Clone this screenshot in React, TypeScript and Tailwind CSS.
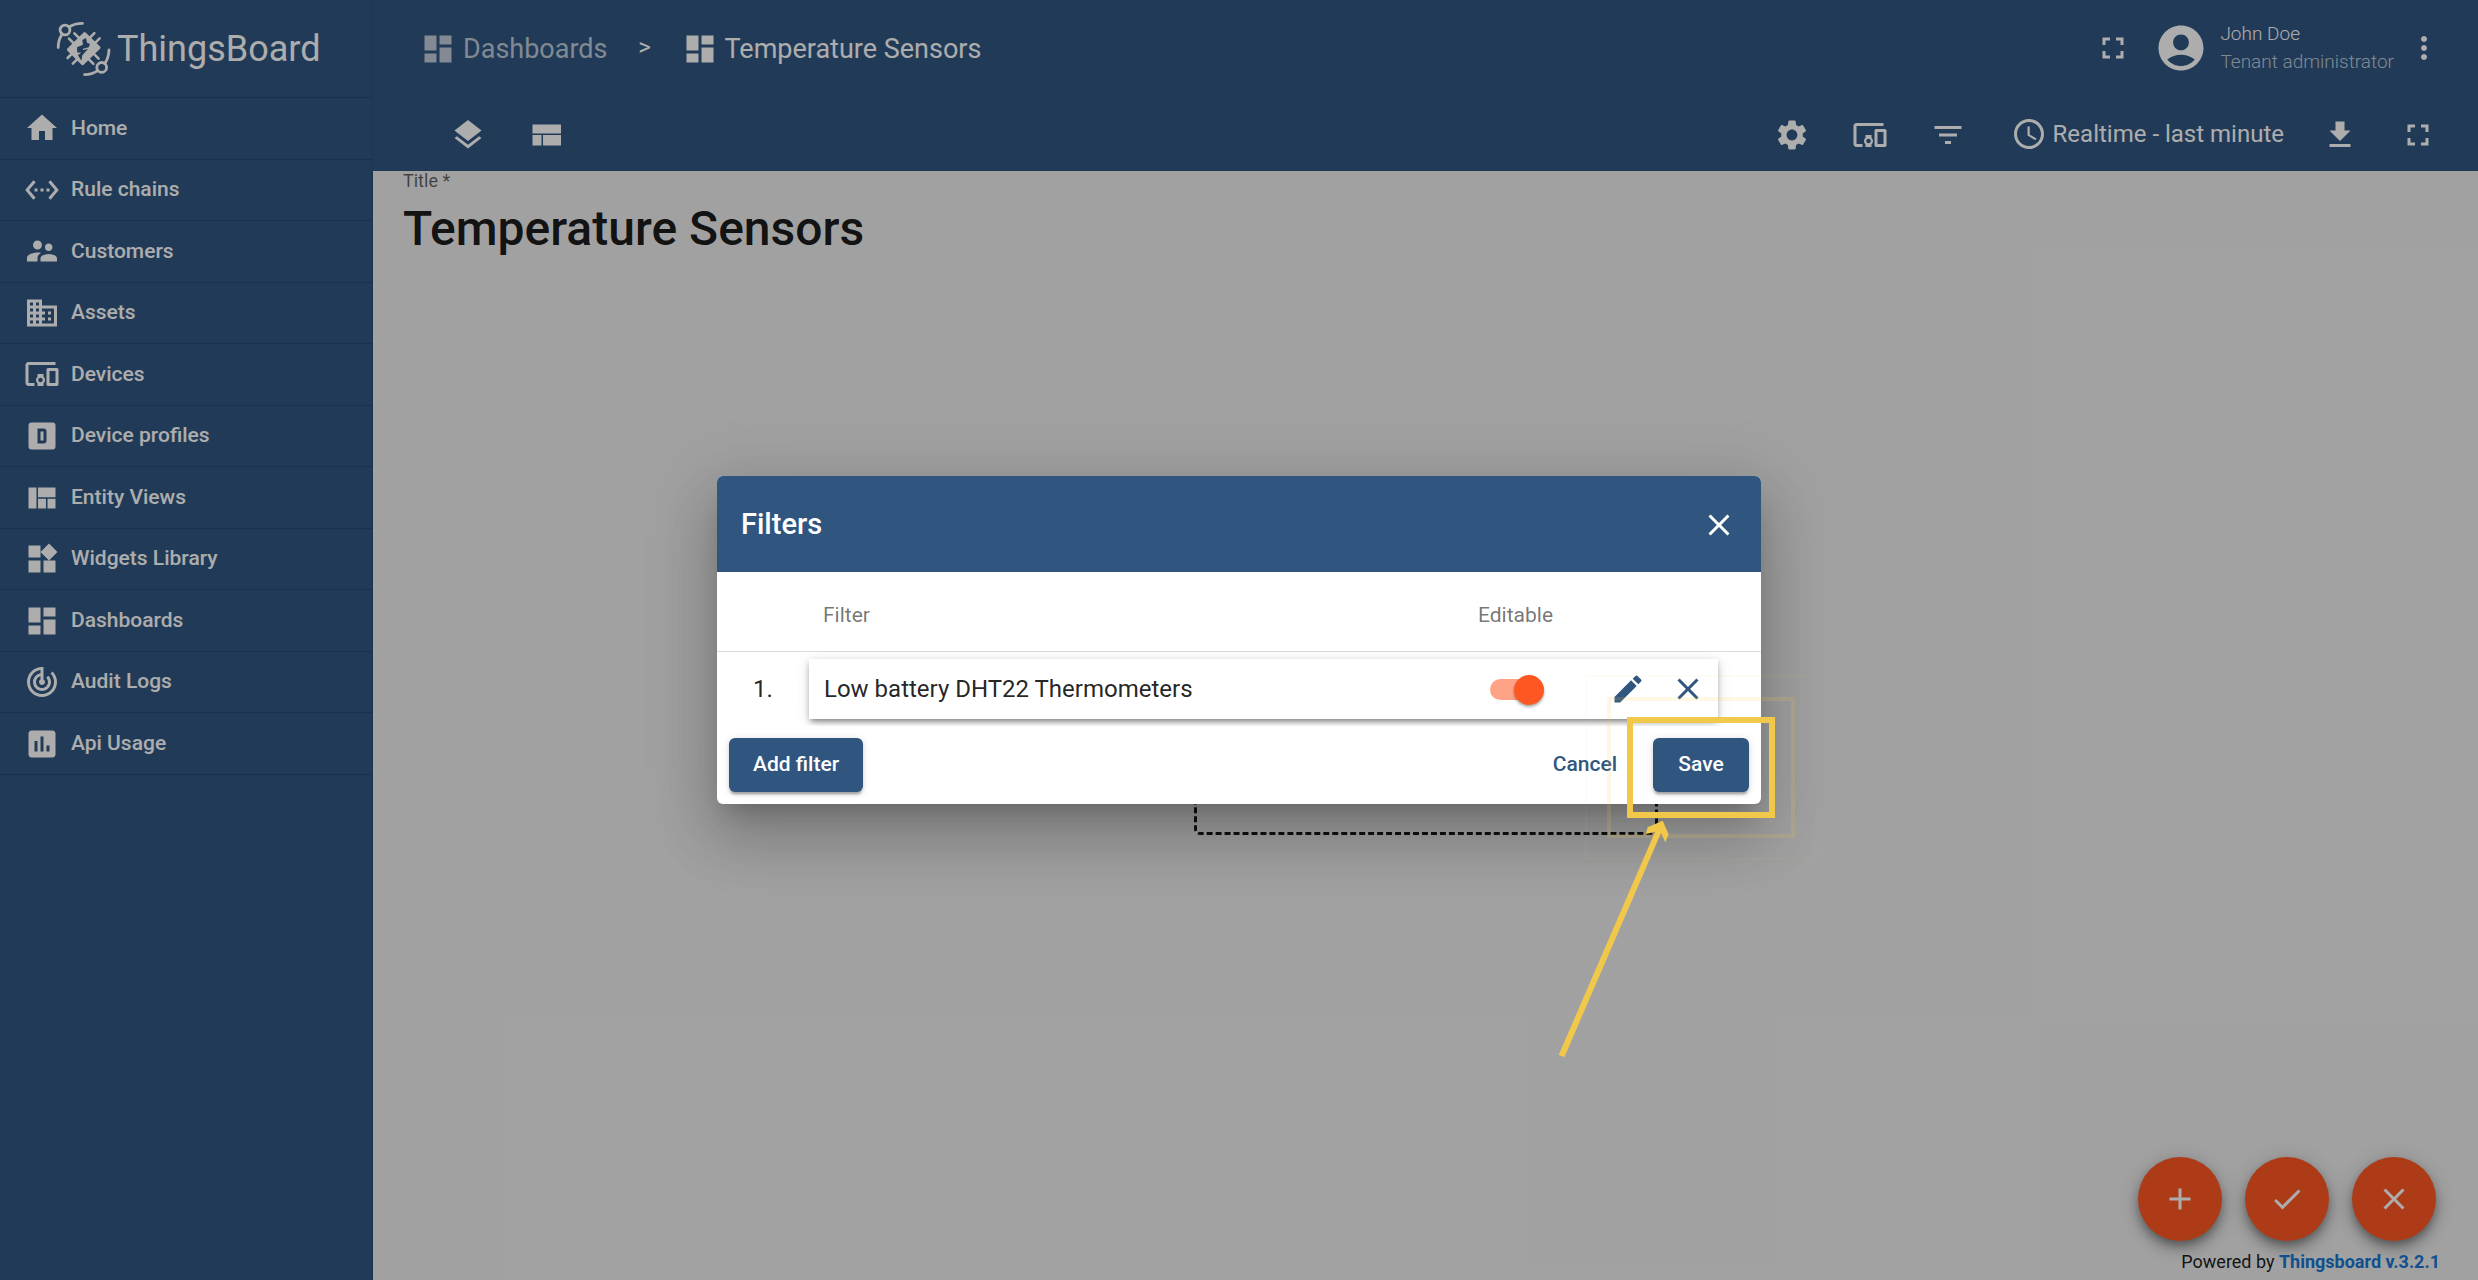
import React from "react";
import type { IconType } from "react-icons";
import {
  MdAccessTime,
  MdAccountCircle,
  MdAdd,
  MdCheck,
  MdClose,
  MdDashboard,
  MdDevicesOther,
  MdDomain,
  MdEdit,
  MdFileDownload,
  MdFilterList,
  MdFullscreen,
  MdHome,
  MdInsertChart,
  MdLayers,
  MdMoreVert,
  MdSettings,
  MdSettingsEthernet,
  MdSupervisorAccount,
  MdTrackChanges,
  MdViewQuilt,
  MdWidgets,
} from "react-icons/md";

type IconProps = { className?: string };
type Icon = IconType | ((props: IconProps) => React.ReactElement);

function AlphaDBox({ className }: IconProps) {
  return (
    <svg viewBox="0 0 24 24" fill="currentColor" className={className} aria-hidden="true">
      <path d="M5 3h14a2 2 0 0 1 2 2v14a2 2 0 0 1-2 2H5a2 2 0 0 1-2-2V5a2 2 0 0 1 2-2m4 4v10h4a2 2 0 0 0 2-2V9a2 2 0 0 0-2-2H9m2 2h2v6h-2V9z" />
    </svg>
  );
}

function LayoutIcon({ className }: IconProps) {
  return (
    <svg viewBox="0 0 24 24" fill="currentColor" className={className} aria-hidden="true">
      <path d="M3 19h6v-7H3v7zm7 0h12v-7H10v7zM3 5v6h19V5H3z" />
    </svg>
  );
}

function LogoMark() {
  return (
    <svg viewBox="0 0 60 60" className="size-[60px] shrink-0" fill="none" stroke="white" strokeLinecap="round" aria-hidden="true">
      <g strokeWidth="2.8">
        <circle cx="11" cy="11" r="4.9" />
        <path d="M28.5 4.4C23 4.4 18.6 5.6 15 8" />
        <path d="M4.2 28.5C4.2 23 5.8 18.6 8.2 15" />
        <circle cx="47.7" cy="48.4" r="4.9" />
        <path d="M55 31C54.8 36.4 53.4 40.6 50.8 44.5" />
        <path d="M30.5 55.6C35.6 55.6 40 54.2 43.8 51.6" />
      </g>
      <g strokeWidth="2.6">
        <path d="M20.4 14.4l5 5M15 19.6l5 5M40.4 14.2l-5 5M45.6 19.4l-5 5" />
        <path d="M13.6 39l5-5M18.8 44.6l5-5M44.6 39.6l-5-5M39.4 44.8l-5-5" />
      </g>
      <path d="M30.6 14.6L45 28.6L28.6 44.6L14.4 30.6Z" fill="white" strokeWidth="3" strokeLinejoin="round" />
      <path
        transform="translate(-4 -3) scale(0.3333)"
        d="M97 72L108 66L111 80L120 84L116 94L99 98L99 102L114 99L97 118L94 134L84 118L94 109L82 110L81 94L99 86Z"
        fill="#305680"
        stroke="none"
      />
    </svg>
  );
}

const menu: { label: string; icon: Icon }[] = [
  { label: "Home", icon: MdHome },
  { label: "Rule chains", icon: MdSettingsEthernet },
  { label: "Customers", icon: MdSupervisorAccount },
  { label: "Assets", icon: MdDomain },
  { label: "Devices", icon: MdDevicesOther },
  { label: "Device profiles", icon: AlphaDBox },
  { label: "Entity Views", icon: MdViewQuilt },
  { label: "Widgets Library", icon: MdWidgets },
  { label: "Dashboards", icon: MdDashboard },
  { label: "Audit Logs", icon: MdTrackChanges },
  { label: "Api Usage", icon: MdInsertChart },
];

function Sidebar() {
  return (
    <aside className="flex w-[373px] shrink-0 flex-col border-r border-black/10 bg-[#305680] text-white">
      <a href="#home" className="flex h-[98px] items-center gap-[3px] border-b border-black/15 pl-[54px]" aria-label="ThingsBoard">
        <LogoMark />
        <span className="text-4xl leading-none">ThingsBoard</span>
      </a>
      <nav>
        <ul className="grid h-[677px] auto-rows-fr">
          {menu.map(({ label, icon: Icon }) => (
            <li key={label} className="border-b border-black/15">
              <a href="#menu" className="flex h-full items-center gap-[11px] pl-6 text-[21px] font-medium">
                <Icon className="size-9" />
                {label}
              </a>
            </li>
          ))}
        </ul>
      </nav>
    </aside>
  );
}

function ToolButton({ label, icon: Icon }: { label: string; icon: Icon }) {
  return (
    <button type="button" aria-label={label} className="flex size-[60px] items-center justify-center">
      <Icon className="size-9" />
    </button>
  );
}

function TopBar() {
  return (
    <header className="flex h-24 items-center justify-between bg-[#305680] pl-[47px] pr-6 text-white">
      <nav aria-label="Breadcrumb" className="flex items-center pt-[2px] text-[27px]">
        <a href="#dashboards" className="flex items-center gap-[7px] text-white/70">
          <MdDashboard className="size-9" />
          Dashboards
        </a>
        <span className="w-[74px] pb-1 text-center text-2xl">&gt;</span>
        <a href="#current" className="flex items-center gap-[7px]">
          <MdDashboard className="size-9" />
          Temperature Sensors
        </a>
      </nav>
      <div className="flex items-center">
        <ToolButton label="Fullscreen" icon={MdFullscreen} />
        <MdAccountCircle className="ml-[11px] size-[54px]" />
        <div className="ml-3 flex flex-col text-[19px] font-light leading-7">
          <span>John Doe</span>
          <span className="text-white/70">Tenant administrator</span>
        </div>
        <ToolButton label="More" icon={MdMoreVert} />
      </div>
    </header>
  );
}

function DashboardToolbar() {
  return (
    <div className="flex h-[75px] items-center justify-between bg-[#305680] pl-[65px] pr-[30px] pt-[2px] text-white">
      <div className="flex gap-[18px]">
        <ToolButton label="Manage states" icon={MdLayers} />
        <ToolButton label="Manage layouts" icon={LayoutIcon} />
      </div>
      <div className="flex items-center gap-[18px]">
        <ToolButton label="Dashboard settings" icon={MdSettings} />
        <ToolButton label="Entity aliases" icon={MdDevicesOther} />
        <ToolButton label="Filters" icon={MdFilterList} />
        <button type="button" className="ml-[15px] mr-2 flex items-center gap-[6px] pb-[2px] text-2xl">
          <MdAccessTime className="size-9" />
          Realtime - last minute
        </button>
        <ToolButton label="Export" icon={MdFileDownload} />
        <ToolButton label="Fullscreen" icon={MdFullscreen} />
      </div>
    </div>
  );
}

function Fab({ label, icon: Icon }: { label: string; icon: Icon }) {
  return (
    <button
      type="button"
      aria-label={label}
      className="flex size-[84px] items-center justify-center rounded-full bg-[#ff5722] text-white shadow-[0_5px_8px_-1px_rgba(0,0,0,0.3),0_9px_15px_rgba(0,0,0,0.18),0_2px_27px_rgba(0,0,0,0.12)]"
    >
      <Icon className="size-9" />
    </button>
  );
}

function DashboardCanvas() {
  return (
    <main className="relative flex flex-1 items-center justify-center bg-[#eeeeee]">
      <div className="absolute left-[30px] top-0 flex flex-col">
        <label htmlFor="title" className="text-lg leading-5 text-black/60">
          Title *
        </label>
        <input
          id="title"
          defaultValue="Temperature Sensors"
          className="mt-2 h-[58px] w-[640px] bg-transparent text-5xl font-medium text-black/90 outline-none"
        />
      </div>
      <button
        type="button"
        aria-label="Add new widget"
        className="h-[218px] w-[464px] rounded-md border-3 border-dashed border-black/90"
      />
      <div className="absolute bottom-[39px] right-[42px] flex gap-[23px]">
        <Fab label="Add widget" icon={MdAdd} />
        <Fab label="Apply changes" icon={MdCheck} />
        <Fab label="Decline changes" icon={MdClose} />
      </div>
      <p className="absolute bottom-[6px] right-[38px] text-lg leading-6 text-black/90">
        Powered by{" "}
        <a href="#thingsboard" className="font-bold text-[#1976d2]">
          Thingsboard v.3.2.1
        </a>
      </p>
    </main>
  );
}

/* Highlight frames and arrow that call out the Save button. */
function SaveHighlight() {
  return (
    <div className="pointer-events-none absolute -inset-x-[26px] -bottom-[26px] -top-[21px] border-6 border-[#f2c84b]">
      <div className="absolute -inset-[26px] border-4 border-[#f2c84b]/15" />
      <div className="absolute -inset-[48px] border-2 border-[#f2c84b]/5" />
      <svg
        viewBox="0 0 420 750"
        className="absolute -left-[93px] top-[97px] h-[250px] w-[140px]"
        fill="#f2c84b"
        aria-hidden="true"
      >
        <path d="M368 2L386 43L376 67L363 39L73 712L56 705L345 36L317 42L323 22Z" />
      </svg>
    </div>
  );
}

const raised = "shadow-[0_4px_2px_-2px_rgba(0,0,0,0.2),0_3px_3px_rgba(0,0,0,0.14),0_1px_8px_rgba(0,0,0,0.12)]";

function FiltersDialog() {
  return (
    <section
      role="dialog"
      aria-modal="true"
      aria-labelledby="dialog-title"
      className="relative w-[1044px] rounded-md bg-white shadow-[0_16px_22px_-10px_rgba(0,0,0,0.2),0_36px_57px_4px_rgba(0,0,0,0.14),0_13px_69px_12px_rgba(0,0,0,0.12)]"
    >
      <header className="flex h-24 items-center justify-between rounded-t-md bg-[#305680] pl-6 pr-3 pt-[2px] text-white">
        <h2 id="dialog-title" className="text-[29px] font-medium">
          Filters
        </h2>
        <ToolButton label="Close" icon={MdClose} />
      </header>
      <div className="flex h-20 items-center border-b border-black/15 pl-[106px] pt-2 text-[21px] text-black/55">
        <span className="flex-1">Filter</span>
        <span className="w-[283px]">Editable</span>
      </div>
      <ol className="overflow-hidden py-[7px] text-2xl text-black/87">
        <li className="flex items-center pr-[43px]">
          <span className="w-[92px] pl-9">1.</span>
          <div className="flex h-[60px] flex-1 items-center bg-white pl-[15px] shadow-[0_5px_5px_-3px_rgba(0,0,0,0.3),0_3px_6px_rgba(0,0,0,0.2),0_2px_14px_rgba(0,0,0,0.12)]">
            <span className="flex-1">Low battery DHT22 Thermometers</span>
            <input
              type="checkbox"
              aria-label="Editable"
              defaultChecked
              className="relative mr-[54px] h-[21px] w-[54px] appearance-none rounded-full bg-[#ff5722]/55 before:absolute before:-top-1 before:left-6 before:size-[30px] before:rounded-full before:bg-[#ff5722] before:shadow-[0_2px_3px_rgba(0,0,0,0.35)]"
            />
            <div className="flex text-[#305680]">
              <ToolButton label="Edit filter" icon={MdEdit} />
              <ToolButton label="Remove filter" icon={MdClose} />
            </div>
          </div>
        </li>
      </ol>
      <footer className="flex items-center p-3 text-[21px] font-medium">
        <button type="button" className={"h-[54px] rounded-md bg-[#305680] px-6 text-white " + raised}>
          Add filter
        </button>
        <button type="button" className="ml-auto h-[54px] px-6 text-[#305680]">
          Cancel
        </button>
        <div className="relative ml-3">
          <button type="button" className={"h-[54px] min-w-24 rounded-md bg-[#305680] px-6 text-white " + raised}>
            Save
          </button>
          <SaveHighlight />
        </div>
      </footer>
    </section>
  );
}

export default function App() {
  return (
    <div className="relative flex h-screen overflow-hidden font-[Roboto,sans-serif]">
      <Sidebar />
      <div className="flex flex-1 flex-col">
        <TopBar />
        <DashboardToolbar />
        <DashboardCanvas />
      </div>
      <div className="absolute inset-0 flex items-center justify-center bg-black/32">
        <FiltersDialog />
      </div>
    </div>
  );
}
